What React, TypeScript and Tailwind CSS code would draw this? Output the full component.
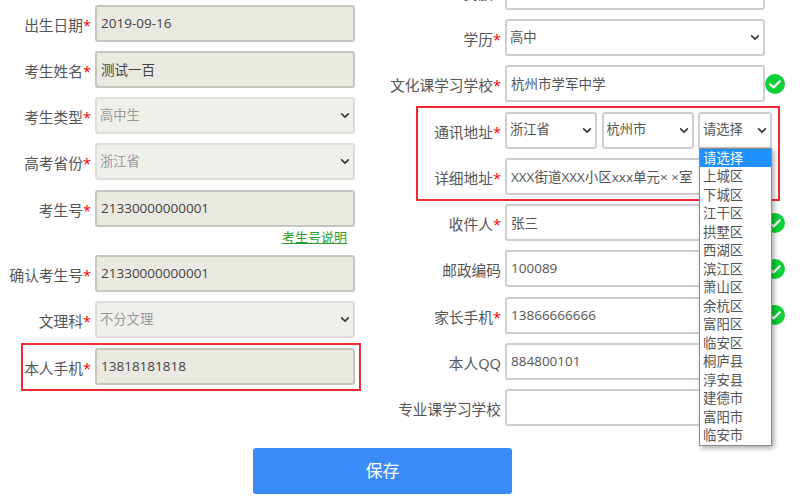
import React from "react";

const FONT = "font-['Open_Sans','Noto_Sans_CJK_SC',sans-serif]";

function Chevron() {
  return (
    <svg viewBox="0 0 12 8" className="pointer-events-none absolute right-[5px] top-[15px] h-[7px] w-[10px]" fill="none" stroke="#343a40" strokeWidth="2" strokeLinecap="round" strokeLinejoin="round">
      <path d="M2 2l4 4 4-4" />
    </svg>
  );
}

function Check() {
  return (
    <svg viewBox="0 0 20 20" className="h-[20px] w-[20px] shrink-0">
      <circle cx="10" cy="10" r="10" fill="#0dd136" />
      <path d="M5.2 10.4l3.4 3 6.2-6.2" fill="none" stroke="#fff" strokeWidth="2.2" strokeLinecap="round" strokeLinejoin="round" />
    </svg>
  );
}

function Label({ text, req = true, w }: { text: string; req?: boolean; w: string }) {
  return (
    <div className={`${w} flex shrink-0 justify-end whitespace-nowrap pt-[3px] text-[14.7px] text-[#555]`}>
      <span>{text}</span>
      {req && <span className="text-[#f00]">*</span>}
    </div>
  );
}

function TextBox({ value, locked = false }: { value: string; locked?: boolean }) {
  return (
    <input
      readOnly
      value={value}
      className={
        locked
          ? `h-[37px] w-[260px] rounded-[3px] border-2 border-[#c6c6c0] bg-[#eae9e2] pb-[1px] pl-[4px] text-[13.5px] text-[#444] outline-none ${FONT}`
          : `h-[37px] w-[260px] rounded-[3px] border-2 border-[#cfcfcf] bg-white pb-[1px] pl-[4px] text-[13.5px] text-[#555] outline-none ${FONT}`
      }
    />
  );
}

function Pick({ value, disabled = false, w = "w-[260px]" }: { value: string; disabled?: boolean; w?: string }) {
  return (
    <div className={`relative h-[37px] ${w}`}>
      <select
        disabled={disabled}
        defaultValue={value}
        className={
          disabled
            ? `h-full w-full appearance-none rounded-[3px] border-2 border-[#dededa] bg-[#f0f0eb] pl-[3px] text-[13.3px] text-[#999] outline-none ${FONT}`
            : `h-full w-full appearance-none rounded-[3px] border-2 border-[#cfcfcf] bg-white pl-[3px] text-[13.3px] text-[#555] outline-none ${FONT}`
        }
      >
        <option>{value}</option>
      </select>
      <Chevron />
    </div>
  );
}

const districts = ["上城区", "下城区", "江干区", "拱墅区", "西湖区", "滨江区", "萧山区", "余杭区", "富阳区", "临安区", "桐庐县", "淳安县", "建德市", "富阳市", "临安市"];

function LeftRow({ text, children }: { text: string; children: React.ReactNode }) {
  return (
    <div className="flex items-center gap-[4px]">
      <Label text={text} w="w-[91px]" />
      {children}
    </div>
  );
}

function RightRow({ text, req = true, children }: { text: string; req?: boolean; children: React.ReactNode }) {
  return (
    <div className="flex items-center gap-[4px]">
      <Label text={text} req={req} w="w-[101px]" />
      {children}
    </div>
  );
}

export default function App() {
  return (
    <div className={`flex h-[499px] w-[800px] flex-col overflow-hidden bg-white ${FONT}`}>
      <div className="flex h-[448px] shrink-0">
        <div className="mt-[4.6px] flex w-[400px] shrink-0 flex-col gap-[9.3px]">
          <LeftRow text="出生日期"><TextBox locked value="2019-09-16" /></LeftRow>
          <LeftRow text="考生姓名"><TextBox locked value="测试一百" /></LeftRow>
          <LeftRow text="考生类型"><Pick disabled value="高中生" /></LeftRow>
          <LeftRow text="高考省份"><Pick disabled value="浙江省" /></LeftRow>
          <LeftRow text="考生号"><TextBox locked value="21330000000001" /></LeftRow>
          <div className="-mt-[7.3px] ml-[282px] h-[17px] text-[13px] leading-[17px] text-[#2a9a2a] underline">考生号说明</div>
          <LeftRow text="确认考生号"><TextBox locked value="21330000000001" /></LeftRow>
          <LeftRow text="文理科"><Pick disabled value="不分文理" /></LeftRow>
          <div className="relative">
            <LeftRow text="本人手机"><TextBox locked value="13818181818" /></LeftRow>
            <div className="pointer-events-none absolute -top-[5px] left-[21px] h-[48px] w-[340px] border-2 border-[#ee2a33]" />
          </div>
        </div>
        <div className="-mt-[27.3px] flex flex-col gap-[9.3px]">
          <RightRow text="民族"><TextBox value="" /></RightRow>
          <RightRow text="学历"><Pick value="高中" /></RightRow>
          <RightRow text="文化课学习学校"><TextBox value="杭州市学军中学" /><div className="-ml-[4px]"><Check /></div></RightRow>
          <div className="relative flex flex-col gap-[9.3px]">
            <div className="pointer-events-none absolute left-[16px] -top-[6px] h-[95px] w-[364px] border-2 border-[#ee2a33]" />
            <RightRow text="通讯地址">
              <div className="flex gap-[4.5px]">
                <Pick value="浙江省" w="w-[92px]" />
                <Pick value="杭州市" w="w-[92px]" />
                <div className="relative">
                  <Pick value="请选择" w="w-[74px]" />
                  <div className="absolute left-[1px] top-[36px] z-10 w-[73px] border border-[#8a8a8a] bg-white text-[13.4px] leading-[18.5px] text-[#555] shadow-[2px_2px_5px_rgba(0,0,0,0.35)]">
                    <div className="bg-[#1e90ff] pl-[3px] text-white">请选择</div>
                    {districts.map((d, i) => (
                      <div key={i} className="pl-[3px]">{d}</div>
                    ))}
                  </div>
                </div>
              </div>
            </RightRow>
            <RightRow text="详细地址"><TextBox value="XXX街道XXX小区xxx单元× ×室" /></RightRow>
          </div>
          <RightRow text="收件人"><TextBox value="张三" /><div className="-ml-[4px]"><Check /></div></RightRow>
          <RightRow text="邮政编码" req={false}><TextBox value="100089" /><div className="-ml-[4px]"><Check /></div></RightRow>
          <RightRow text="家长手机"><TextBox value="13866666666" /><div className="-ml-[4px]"><Check /></div></RightRow>
          <RightRow text="本人QQ" req={false}><TextBox value="884800101" /></RightRow>
          <RightRow text="专业课学习学校" req={false}><TextBox value="" /></RightRow>
        </div>
      </div>
      <button className="ml-[253px] h-[46px] w-[259px] rounded-[3px] bg-[#3a8af8] text-[17px] text-white">保存</button>
    </div>
  );
}
